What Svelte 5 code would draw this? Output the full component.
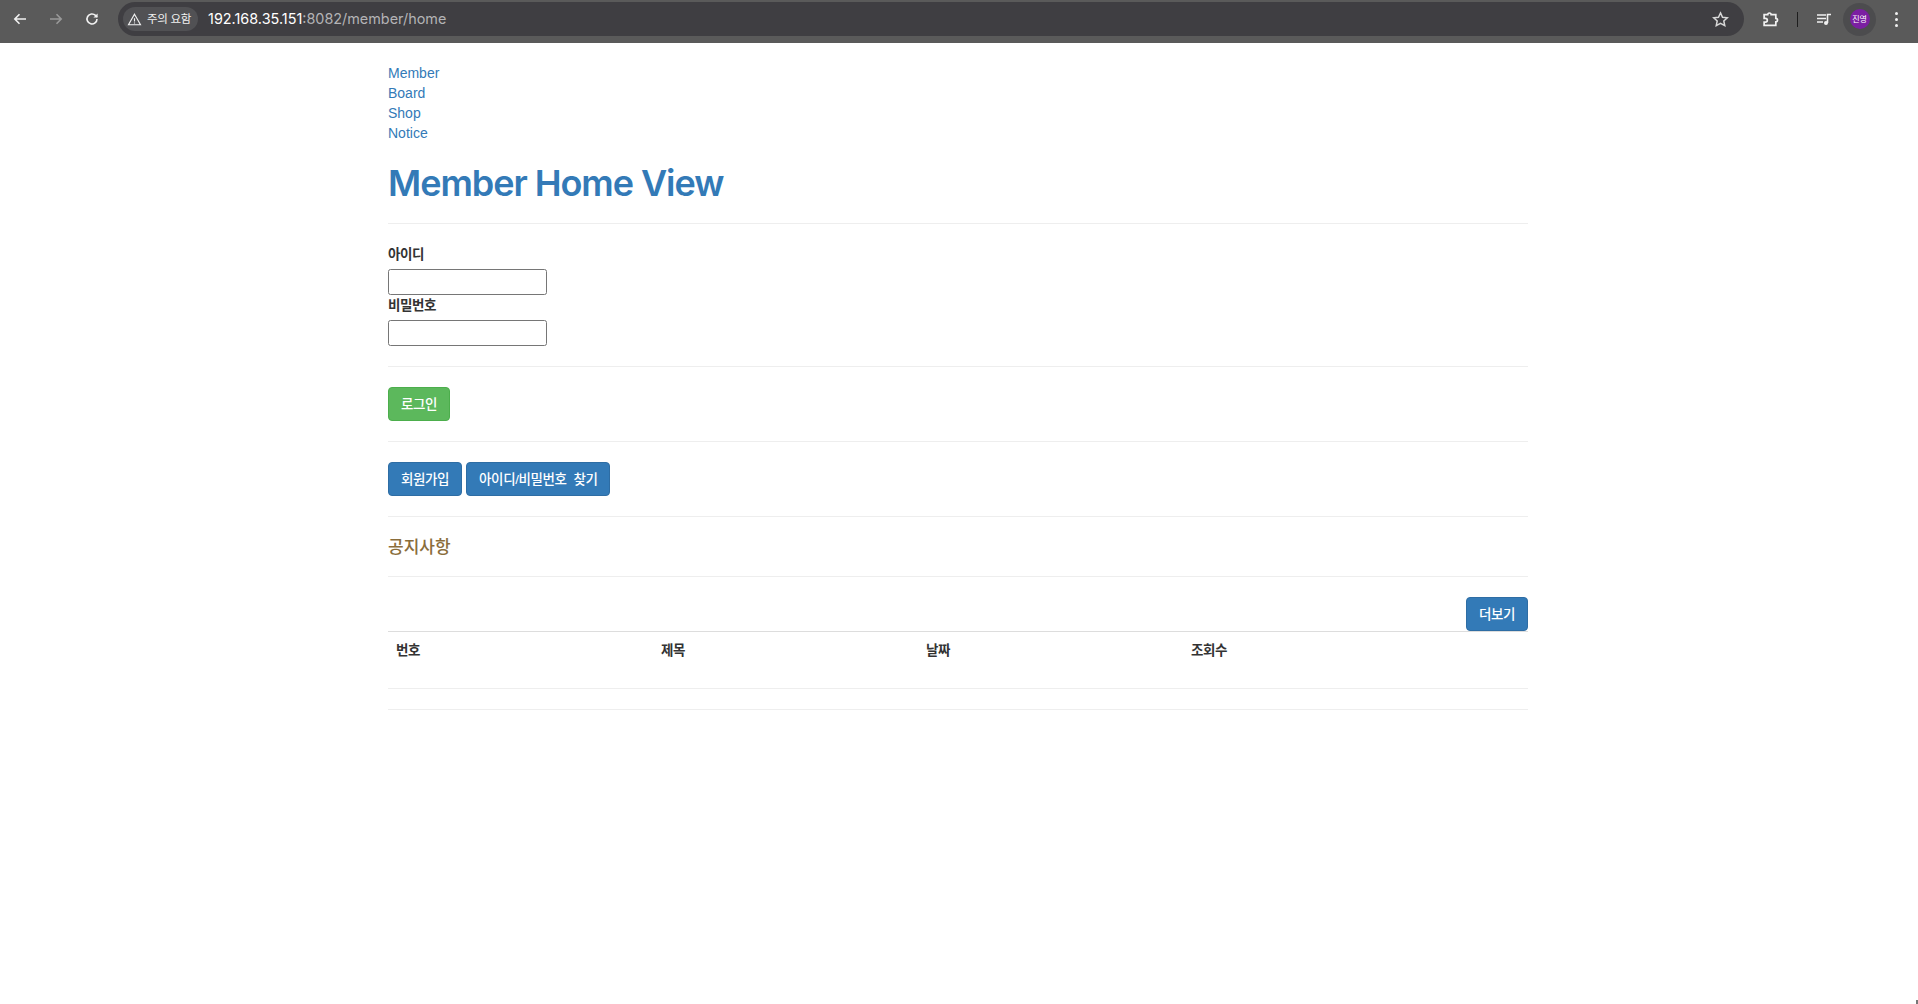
<script lang="ts">
  const navLinks = ['Member', 'Board', 'Shop', 'Notice'];
  const columns = ['번호', '제목', '날짜', '조회수', ''];
</script>

<header class="toolbar">
  <button class="tool" aria-label="back">
    <svg viewBox="0 0 16 16" width="16" height="16"><path d="M14 8H3M7.5 3.2 2.8 8l4.7 4.8" /></svg>
  </button>
  <button class="tool dim" aria-label="forward">
    <svg viewBox="0 0 16 16" width="16" height="16"><path d="M2 8h11M8.5 3.2 13.2 8l-4.7 4.8" /></svg>
  </button>
  <button class="tool" aria-label="reload">
    <svg viewBox="0 0 16 16" width="16" height="16"><path d="M13 8a5 5 0 1 1-1.5-3.6L13 6" /><path class="solid" d="M13.6 2.4v4.2H9.4z" /></svg>
  </button>
  <div class="omnibox">
    <span class="chip">
      <svg viewBox="0 0 16 16" width="15" height="15"><path d="M8 2.4 14.4 13.6H1.6z" /><path d="M8 6.6v3.6M8 11.2v1" /></svg>
      주의 요함
    </span>
    <span class="url"><b>192.168.35.151</b>:8082/member/home</span>
    <svg class="star" viewBox="0 0 16 16" width="17" height="17"><path d="M8 1.8l1.9 4.1 4.5.5-3.3 3 .9 4.4L8 11.6l-4 2.2.9-4.4-3.3-3 4.5-.5z" /></svg>
  </div>
  <button class="tool ext" aria-label="extensions">
    <svg viewBox="0 0 16 16" width="17" height="17"><path d="M2 3.5h3.4a1.6 1.6 0 0 1 3.2 0H13v3.4a1.6 1.6 0 0 1 0 3.2v3.4H2v-3h1.2a1.8 1.8 0 0 0 0-3.6H2z" /></svg>
  </button>
  <span class="divider"></span>
  <button class="tool media" aria-label="media">
    <svg viewBox="0 0 16 16" width="16" height="16"><path d="M1 4h9M1 7.5h9M1 11h6M11.5 12V3.5H15" /><circle class="solid" cx="10" cy="12" r="2" /></svg>
  </button>
  <span class="avatar-ring"><span class="avatar">진영</span></span>
  <span class="dots"><i></i><i></i><i></i></span>
</header>

<main class="container">
  <nav class="side-links">
    {#each navLinks as link}
      <div><a href="#top">{link}</a></div>
    {/each}
  </nav>

  <h1>Member Home View</h1>
  <hr />

  <form>
    <label for="userid">아이디</label>
    <input id="userid" type="text" />
    <label for="userpw">비밀번호</label>
    <input id="userpw" type="password" />
  </form>
  <hr />

  <button class="btn green">로그인</button>
  <hr />

  <div class="btn-row">
    <button class="btn blue">회원가입</button>
    <button class="btn blue">아이디/비밀번호 찾기</button>
  </div>
  <hr />

  <h4>공지사항</h4>
  <hr />

  <div class="more-row"><button class="btn blue">더보기</button></div>
  <table>
    <colgroup>
      <col class="data-col" /><col class="data-col" /><col class="data-col" /><col class="data-col" /><col />
    </colgroup>
    <thead>
      <tr>
        {#each columns as col}
          <th>{col}</th>
        {/each}
      </tr>
    </thead>
    <tbody>
      <tr><td colspan="5"></td></tr>
    </tbody>
  </table>
  <hr class="last" />
</main>

<span class="corner"></span>

<style>
  :global(body) {
    margin: 0;
    background: #fff;
    color: #333;
    font-family: 'Liberation Sans', 'Noto Sans CJK KR', sans-serif;
    font-size: 14px;
    line-height: 20px;
  }

  .toolbar {
    height: 43px;
    box-sizing: border-box;
    display: flex;
    align-items: center;
    background: #5a5a5a;
    padding: 0 4px 5px 2px;
    color: #fff;
  }

  .tool {
    width: 36px;
    height: 32px;
    padding: 0;
    border: 0;
    background: none;
    display: flex;
    align-items: center;
    justify-content: center;
  }

  .tool svg path {
    fill: none;
    stroke: #f1f1f1;
    stroke-width: 1.6;
  }

  .tool svg .solid {
    fill: #f1f1f1;
    stroke: none;
  }

  .tool.dim svg path {
    stroke: #999;
  }

  .omnibox {
    flex: 1;
    height: 34px;
    margin-left: 8px;
    border-radius: 17px;
    background: #3f3e42;
    display: flex;
    align-items: center;
    padding: 0 15px 0 5px;
    font-family: 'Inter', 'Noto Sans CJK KR', sans-serif;
    font-size: 14.4px;
  }

  .chip {
    display: flex;
    align-items: center;
    gap: 5px;
    height: 24px;
    padding: 0 7px 0 4px;
    border-radius: 12px;
    background: #515154;
    font-size: 11.5px;
    letter-spacing: -0.3px;
    color: #f1f1f1;
  }

  .chip path {
    fill: none;
    stroke: #f1f1f1;
    stroke-width: 1.2;
  }

  .url {
    margin-left: 10px;
    flex: 1;
    color: #b3b3b5;
  }

  .url b {
    font-weight: 400;
    color: #fff;
  }

  .star path {
    fill: none;
    stroke: #d8d8d8;
    stroke-width: 1.4;
  }

  .ext {
    margin-left: 8px;
  }

  .divider {
    width: 1px;
    height: 15px;
    margin: 0 10px 0 9px;
    background: #1e1e1e;
  }

  .media {
    width: 32px;
  }

  .avatar-ring {
    width: 33px;
    height: 33px;
    margin-left: 3px;
    border-radius: 50%;
    background: #4c4c4e;
    display: flex;
    align-items: center;
    justify-content: center;
  }

  .avatar {
    width: 20px;
    height: 20px;
    border-radius: 50%;
    background: #7b1fa2;
    font-family: 'Noto Sans CJK KR', sans-serif;
    font-size: 8px;
    line-height: 20px;
    text-align: center;
  }

  .dots {
    width: 36px;
    margin-left: 2px;
    display: flex;
    flex-direction: column;
    align-items: center;
    gap: 3px;
  }

  .dots i {
    width: 3px;
    height: 3px;
    border-radius: 50%;
    background: #f1f1f1;
  }

  .container {
    width: 1140px;
    margin: 0 0 0 388px;
    padding-top: 20px;
  }

  a {
    color: #337ab7;
    text-decoration: none;
  }

  h1 {
    margin: 20px 0 10px;
    font-family: 'Inter', sans-serif;
    font-size: 36px;
    font-weight: 600;
    letter-spacing: -1.05px;
    line-height: 40px;
    color: #337ab7;
  }

  hr {
    margin: 20px 0;
    border: 0;
    border-top: 1px solid #eee;
  }

  label {
    display: block;
    padding-top: 1px;
    margin-bottom: 4px;
    font-size: 13.5px;
    font-weight: 700;
    letter-spacing: -0.4px;
  }

  input {
    display: block;
    box-sizing: border-box;
    width: 159px;
    height: 26px;
    margin: 0;
    padding: 1px 2px;
    border: 1px solid #767676;
    border-radius: 2.5px;
    background: #fff;
  }

  .btn {
    height: 34px;
    padding: 7px 12px 5px;
    border: 1px solid transparent;
    border-radius: 4px;
    color: #fff;
    font: inherit;
    font-size: 13.5px;
    font-weight: 500;
    letter-spacing: -0.4px;
    word-spacing: 3.5px;
    white-space: nowrap;
  }

  .green {
    display: block;
    background: #5cb85c;
    border-color: #4cae4c;
  }

  .blue {
    background: #337ab7;
    border-color: #2e6da4;
  }

  .btn-row {
    display: flex;
    gap: 4px;
  }

  h4 {
    margin: 10px 0;
    padding-top: 2px;
    font-size: 17px;
    font-weight: 500;
    line-height: 17px;
    color: #8a6d3b;
  }

  .more-row {
    display: flex;
    justify-content: flex-end;
  }

  table {
    width: 100%;
    margin-bottom: 20px;
    border-collapse: collapse;
    table-layout: fixed;
  }

  .data-col {
    width: 265px;
  }

  th {
    padding: 9px 8px 7px;
    text-align: left;
    border-top: 1px solid #ddd;
    height: 40px;
    vertical-align: top;
    font-size: 13.5px;
    letter-spacing: -0.4px;
  }

  td {
    padding: 0;
    height: 0;
    border-top: 1px solid #eee;
  }

  .last {
    margin: 0;
  }

  .corner {
    position: fixed;
    right: 0;
    bottom: 0;
    width: 2px;
    height: 4px;
    background: #777;
  }
</style>
